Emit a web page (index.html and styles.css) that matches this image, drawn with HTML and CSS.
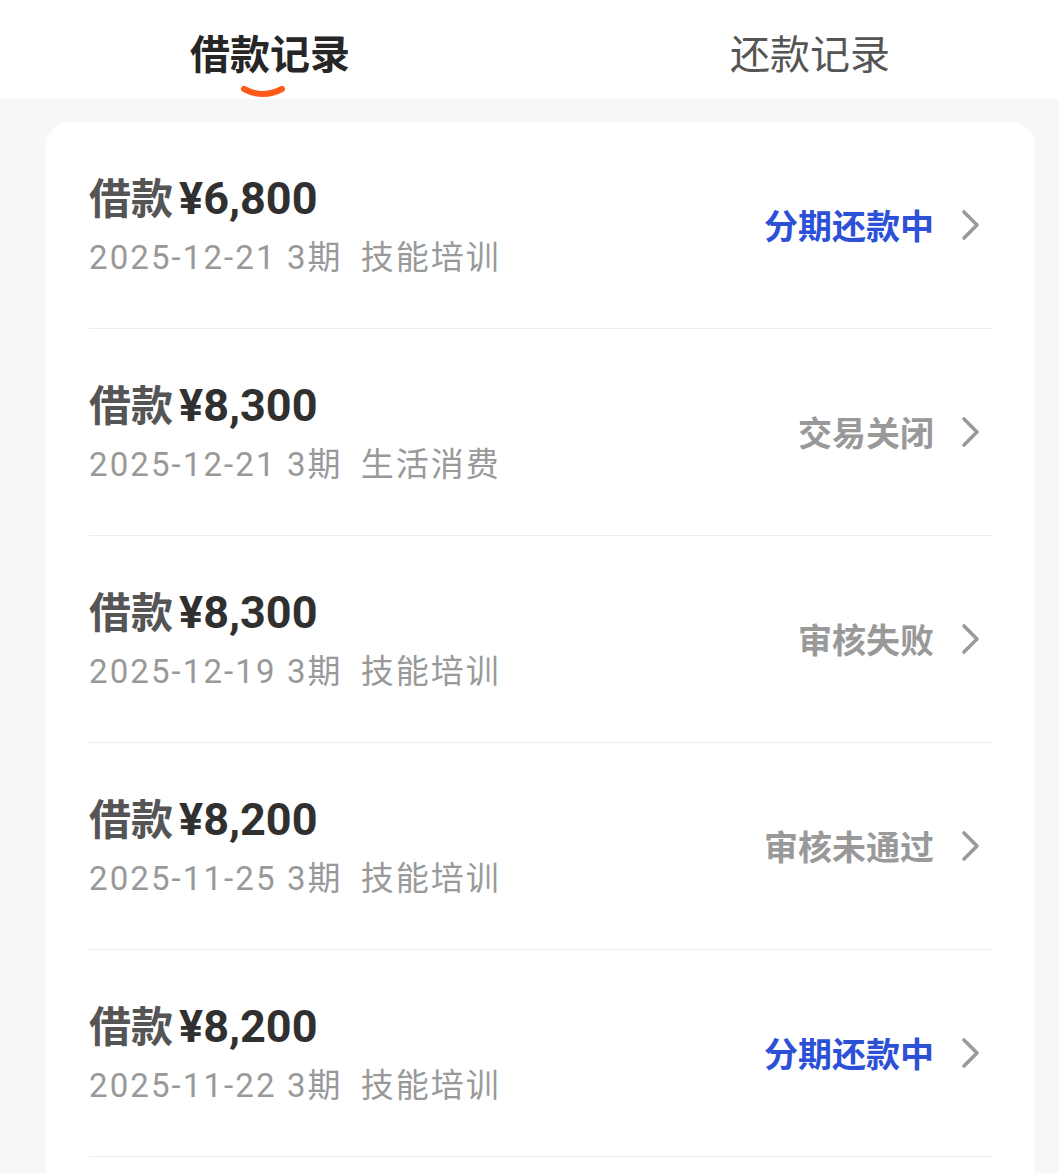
FILE: index.html
```html
<!DOCTYPE html>
<html lang="zh-CN">
<head>
    <meta charset="UTF-8">
    <meta name="viewport" content="width=device-width, initial-scale=1.0">
    <title>借款记录</title>
    <link rel="stylesheet" href="styles.css">
</head>
<body>
    <div class="tabs">
        <div class="tab active">
            借款记录
            <svg class="tab-mark" width="46" height="14" viewBox="0 0 46 14"><path d="M4 4 Q23 14 42 4" fill="none" stroke="#ff5a17" stroke-width="6" stroke-linecap="round"/></svg>
        </div>
        <div class="tab">还款记录</div>
    </div>

    <div class="card">
        <div class="record">
            <div class="record-info">
                <div class="record-title"><span class="label">借款</span><span class="amount">¥6,800</span></div>
                <div class="record-sub"><span class="date">2025-12-21 3期</span><span class="purpose">技能培训</span></div>
            </div>
            <div class="status blue">分期还款中</div>
            <svg class="arrow" width="32" height="32" viewBox="0 0 32 32"><path d="M9 3 L22 16 L9 29" fill="none" stroke="#9a9a9a" stroke-width="3.6" stroke-linecap="round" stroke-linejoin="round"/></svg>
        </div>
        <div class="record">
            <div class="record-info">
                <div class="record-title"><span class="label">借款</span><span class="amount">¥8,300</span></div>
                <div class="record-sub"><span class="date">2025-12-21 3期</span><span class="purpose">生活消费</span></div>
            </div>
            <div class="status">交易关闭</div>
            <svg class="arrow" width="32" height="32" viewBox="0 0 32 32"><path d="M9 3 L22 16 L9 29" fill="none" stroke="#9a9a9a" stroke-width="3.6" stroke-linecap="round" stroke-linejoin="round"/></svg>
        </div>
        <div class="record">
            <div class="record-info">
                <div class="record-title"><span class="label">借款</span><span class="amount">¥8,300</span></div>
                <div class="record-sub"><span class="date">2025-12-19 3期</span><span class="purpose">技能培训</span></div>
            </div>
            <div class="status">审核失败</div>
            <svg class="arrow" width="32" height="32" viewBox="0 0 32 32"><path d="M9 3 L22 16 L9 29" fill="none" stroke="#9a9a9a" stroke-width="3.6" stroke-linecap="round" stroke-linejoin="round"/></svg>
        </div>
        <div class="record">
            <div class="record-info">
                <div class="record-title"><span class="label">借款</span><span class="amount">¥8,200</span></div>
                <div class="record-sub"><span class="date">2025-11-25 3期</span><span class="purpose">技能培训</span></div>
            </div>
            <div class="status">审核未通过</div>
            <svg class="arrow" width="32" height="32" viewBox="0 0 32 32"><path d="M9 3 L22 16 L9 29" fill="none" stroke="#9a9a9a" stroke-width="3.6" stroke-linecap="round" stroke-linejoin="round"/></svg>
        </div>
        <div class="record">
            <div class="record-info">
                <div class="record-title"><span class="label">借款</span><span class="amount">¥8,200</span></div>
                <div class="record-sub"><span class="date">2025-11-22 3期</span><span class="purpose">技能培训</span></div>
            </div>
            <div class="status blue">分期还款中</div>
            <svg class="arrow" width="32" height="32" viewBox="0 0 32 32"><path d="M9 3 L22 16 L9 29" fill="none" stroke="#9a9a9a" stroke-width="3.6" stroke-linecap="round" stroke-linejoin="round"/></svg>
        </div>
    </div>
</body>
</html>
```

FILE: styles.css
```css
body {
    font-family: Roboto, "Noto Sans CJK SC", sans-serif;
    margin: 0;
    padding: 0;
    background-color: #f7f7f7;
    color: #333;
}
/* Tabs */
.tabs {
    display: flex;
    height: 99px;
    background: #fff;
    overflow: hidden;
}
.tab {
    position: relative;
    flex: 0 0 540px;
    text-align: center;
    font-size: 40px;
    line-height: 40px;
    padding-top: 36px;
    color: #555;
}
.tab.active {
    font-weight: bold;
    color: #262626;
}
.tab-mark {
    position: absolute;
    left: 240px;
    top: 85px;
}
/* Card */
.card {
    margin: 23px 24px 0 46px;
    background: #fff;
    border-radius: 24px 24px 0 0;
    padding: 0 42px 16px 43px;
}
.record {
    display: flex;
    align-items: center;
    height: 206px;
    border-bottom: 1px solid #ececec;
}
.record-info {
    flex: 1;
}
.record-title {
    font-size: 42px;
    line-height: 56px;
    font-weight: bold;
    color: #555;
}
.record-title .amount {
    color: #303030;
    font-size: 45px;
    margin-left: 6px;
}
.record-sub {
    margin-top: 8px;
    font-size: 33px;
    line-height: 44px;
    color: #999;
}
.date {
    letter-spacing: 2.1px;
}
.purpose {
    margin-left: 18px;
    letter-spacing: 2px;
}
.status {
    font-size: 34px;
    font-weight: bold;
    color: #999;
    margin-top: -2px;
}
.status.blue {
    color: #2c50d6;
}
.arrow {
    margin-left: 21px;
    margin-right: 6px;
}
```
